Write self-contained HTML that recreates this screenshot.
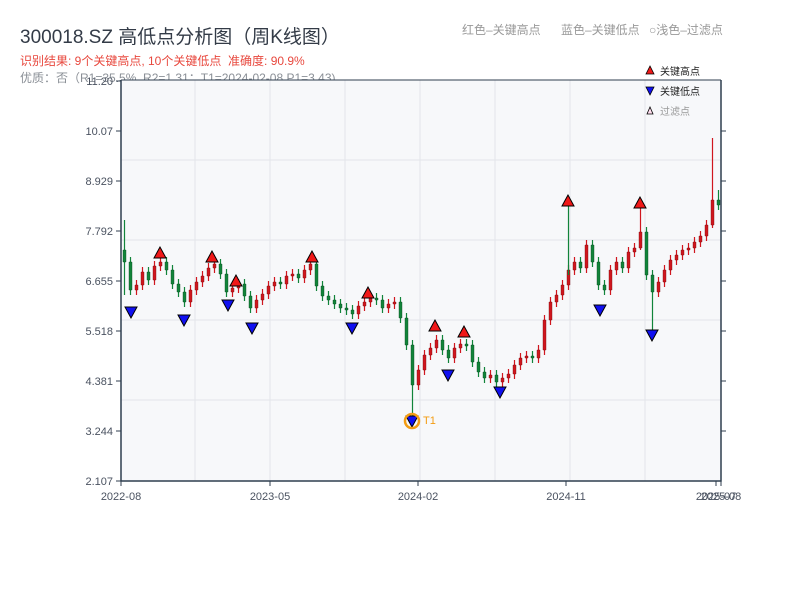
<!DOCTYPE html>
<html><head><meta charset="utf-8"><style>
body{margin:0;width:800px;height:600px;background:#fff;overflow:hidden;font-family:"Liberation Sans","Noto Sans CJK SC",sans-serif;position:relative}
.t{position:absolute;white-space:nowrap}
svg text{font-family:"Liberation Sans","Noto Sans CJK SC",sans-serif}
</style></head><body>
<div class="t" style="left:20px;top:22px;font-size:19px;color:#333b47">300018.SZ 高低点分析图（周K线图）</div>
<div class="t" style="left:20px;top:52px;font-size:12px;color:#e8483e">识别结果: 9个关键高点, 10个关键低点&nbsp;&nbsp;准确度: 90.9%</div>
<div class="t" style="left:20px;top:69px;font-size:12px;color:#8a8f96">优质：否（R1=35.5%, R2=1.31；T1=2024-02-08 P1=3.43)</div>
<div class="t" style="left:462px;top:21px;font-size:12px;color:#999">红色–关键高点</div>
<div class="t" style="left:561px;top:21px;font-size:12px;color:#999">蓝色–关键低点</div>
<div class="t" style="left:649px;top:21px;font-size:12px;color:#999">○浅色–过滤点</div>
<svg width="800" height="600" style="position:absolute;left:0;top:0">
<rect x="121" y="80" width="600" height="401" fill="#f7f8fa"/>
<g stroke="#e3e5ea">
<line x1="121" x2="721" y1="160" y2="160"/><line x1="121" x2="721" y1="240" y2="240"/><line x1="121" x2="721" y1="320" y2="320"/><line x1="121" x2="721" y1="400" y2="400"/>
<line x1="195" x2="195" y1="80" y2="481"/><line x1="270" x2="270" y1="80" y2="481"/><line x1="345" x2="345" y1="80" y2="481"/><line x1="420" x2="420" y1="80" y2="481"/><line x1="495" x2="495" y1="80" y2="481"/><line x1="570" x2="570" y1="80" y2="481"/><line x1="645" x2="645" y1="80" y2="481"/>
</g>
<g font-size="11" fill="#4a5260" text-anchor="end">
<text x="113" y="85">11.20</text><text x="113" y="135">10.07</text><text x="113" y="185">8.929</text><text x="113" y="235">7.792</text><text x="113" y="285">6.655</text><text x="113" y="335">5.518</text><text x="113" y="385">4.381</text><text x="113" y="435">3.244</text><text x="113" y="485">2.107</text>
</g>
<path stroke="#2f3e4f" d="M116 81h5M116 131h5M116 181h5M116 231h5M116 281h5M116 331h5M116 381h5M116 431h5M116 481h5M721 131h5M721 181h5M721 231h5M721 281h5M721 331h5M721 381h5M721 431h5M121 481v5M270 481v5M418 481v5M566 481v5M716 481v5M721 481v5"/>
<g font-size="11" fill="#4a5260" text-anchor="middle">
<text x="121" y="500">2022-08</text><text x="270" y="500">2023-05</text><text x="418" y="500">2024-02</text><text x="566" y="500">2024-11</text><text x="716" y="500">2025-07</text><text x="721" y="500">2025-08</text>
</g>
<path stroke="#d0161e" stroke-width="1.2" fill="none" d="M136.5 280v15M142.5 267v23M154.5 261v24M160.5 257v14M190.5 285v22M196.5 277v18M202.5 271v16M208.5 263v18M214.5 259v14M232.5 283v14M238.5 279v14M256.5 295v18M262.5 289v16M268.5 281v18M274.5 277v14M286.5 271v18M292.5 269v12M304.5 265v18M310.5 259v16M358.5 301v18M364.5 297v14M370.5 293v14M388.5 299v14M394.5 297v12M418.5 365v25M424.5 350v25M430.5 343v17M436.5 335v18M454.5 343v20M460.5 339v14M490.5 370v13M502.5 373v14M508.5 369v14M514.5 360v19M520.5 353v17M526.5 351v12M538.5 345v18M544.5 315v40M550.5 297v28M556.5 290v17M562.5 280v20M568.5 265v25M574.5 257v18M586.5 240v33M610.5 265v30M616.5 257v18M628.5 247v26M634.5 243v14M640.5 205v45M658.5 277v20M664.5 265v22M670.5 255v20M676.5 250v15M682.5 245v15M688.5 243v12M694.5 237v16M700.5 231v16M706.5 220v21M712.5 138v90"/>
<path fill="#d0161e" stroke="#7a0a0e" stroke-width=".4" d="M135 285h3v5h-3zM141 272h3v13h-3zM153 266h3v14h-3zM159 262h3v4h-3zM189 290h3v12h-3zM195 282h3v8h-3zM201 276h3v6h-3zM207 268h3v8h-3zM213 264h3v4h-3zM231 288h3v4h-3zM237 284h3v4h-3zM255 300h3v8h-3zM261 294h3v6h-3zM267 286h3v8h-3zM273 282h3v4h-3zM285 276h3v8h-3zM291 274h3v2h-3zM303 270h3v8h-3zM309 264h3v6h-3zM357 306h3v8h-3zM363 302h3v4h-3zM369 298h3v4h-3zM387 304h3v4h-3zM393 302h3v2h-3zM417 370h3v15h-3zM423 355h3v15h-3zM429 348h3v7h-3zM435 340h3v8h-3zM453 348h3v10h-3zM459 344h3v4h-3zM489 375h3v3h-3zM501 378h3v4h-3zM507 374h3v4h-3zM513 365h3v9h-3zM519 358h3v7h-3zM525 356h3v2h-3zM537 350h3v8h-3zM543 320h3v30h-3zM549 302h3v18h-3zM555 295h3v7h-3zM561 285h3v10h-3zM567 270h3v15h-3zM573 262h3v8h-3zM585 245h3v23h-3zM609 270h3v20h-3zM615 262h3v8h-3zM627 252h3v16h-3zM633 248h3v4h-3zM639 232h3v16h-3zM657 282h3v10h-3zM663 270h3v12h-3zM669 260h3v10h-3zM675 255h3v5h-3zM681 250h3v5h-3zM687 248h3v2h-3zM693 242h3v6h-3zM699 236h3v6h-3zM705 225h3v11h-3zM711 200h3v25h-3z"/>
<path stroke="#11843a" stroke-width="1.2" fill="none" d="M124.5 220v75M130.5 257v38M148.5 267v18M166.5 257v18M172.5 265v24M178.5 279v18M184.5 287v20M220.5 259v20M226.5 269v28M244.5 279v22M250.5 291v22M280.5 277v12M298.5 269v14M316.5 259v32M322.5 281v20M328.5 291v14M334.5 295v14M340.5 299v14M346.5 303v12M352.5 305v14M376.5 293v12M382.5 295v18M400.5 297v26M406.5 313v37M412.5 340v78M442.5 335v20M448.5 345v18M466.5 339v12M472.5 340v27M478.5 357v20M484.5 367v16M496.5 370v17M532.5 351v12M568.5 205v70M580.5 257v16M592.5 240v27M598.5 257v33M604.5 280v15M622.5 257v16M646.5 227v53M652.5 270v63M718.5 190v20"/>
<path fill="#11843a" stroke="#0a4a20" stroke-width=".4" d="M123 250h3v12h-3zM129 262h3v28h-3zM147 272h3v8h-3zM165 262h3v8h-3zM171 270h3v14h-3zM177 284h3v8h-3zM183 292h3v10h-3zM219 264h3v10h-3zM225 274h3v18h-3zM243 284h3v12h-3zM249 296h3v12h-3zM279 282h3v2h-3zM297 274h3v4h-3zM315 264h3v22h-3zM321 286h3v10h-3zM327 296h3v4h-3zM333 300h3v4h-3zM339 304h3v4h-3zM345 308h3v2h-3zM351 310h3v4h-3zM375 298h3v2h-3zM381 300h3v8h-3zM399 302h3v16h-3zM405 318h3v27h-3zM411 345h3v40h-3zM441 340h3v10h-3zM447 350h3v8h-3zM465 344h3v2h-3zM471 345h3v17h-3zM477 362h3v10h-3zM483 372h3v6h-3zM495 375h3v7h-3zM531 356h3v2h-3zM579 262h3v6h-3zM591 245h3v17h-3zM597 262h3v23h-3zM603 285h3v5h-3zM621 262h3v6h-3zM645 232h3v43h-3zM651 275h3v17h-3zM717 200h3v5h-3z"/>
<g fill="#f01818" stroke="#000" stroke-width="1">
<polygon points="160,247 154,258 166,258"/><polygon points="212,251 206,262 218,262"/><polygon points="236,275 230,286 242,286"/><polygon points="312,251 306,262 318,262"/><polygon points="368,287 362,298 374,298"/><polygon points="435,320 429,331 441,331"/><polygon points="464,326 458,337 470,337"/><polygon points="568,195 562,206 574,206"/><polygon points="640,197 634,208 646,208"/>
</g>
<g fill="#1010f0" stroke="#000" stroke-width="1">
<polygon points="131,318 125,307 137,307"/><polygon points="184,326 178,315 190,315"/><polygon points="228,311 222,300 234,300"/><polygon points="252,334 246,323 258,323"/><polygon points="352,334 346,323 358,323"/><polygon points="412,427 406,416 418,416"/><polygon points="448,381 442,370 454,370"/><polygon points="500,398 494,387 506,387"/><polygon points="600,316 594,305 606,305"/><polygon points="652,341 646,330 658,330"/>
</g>
<circle cx="412" cy="421" r="7" fill="none" stroke="#f39c12" stroke-width="2.5"/>
<text x="423" y="424" font-size="11" fill="#f39c12">T1</text>
<polyline points="121,80 121,481 721,481 721,80" fill="none" stroke="#2f3e4f" stroke-width="1.5"/>
<line x1="121" x2="721" y1="80" y2="80" stroke="#2f3e4f"/>
<polygon points="650,66 646,74 654,74" fill="#f01818" stroke="#000" stroke-width=".8"/><text x="660" y="75" font-size="10" fill="#222">关键高点</text>
<polygon points="650,95 646,87 654,87" fill="#1010f0" stroke="#000" stroke-width=".8"/><text x="660" y="95" font-size="10" fill="#222">关键低点</text>
<polygon points="650,107 647,114 653,114" fill="#fde" stroke="#000" stroke-width=".8"/><text x="660" y="115" font-size="10" fill="#999">过滤点</text>
</svg>
</body></html>
